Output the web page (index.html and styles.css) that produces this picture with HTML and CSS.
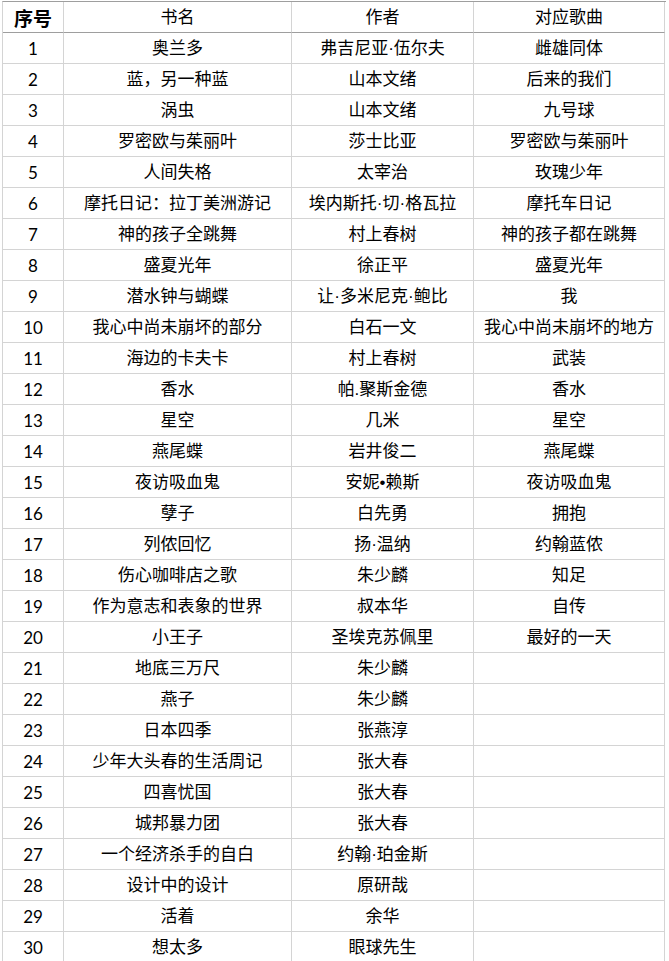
FILE: index.html
```html
<!DOCTYPE html>
<html lang="zh">
<head>
<meta charset="utf-8">
<link rel="stylesheet" href="styles.css">
</head>
<body>
<div class="sheet">
  <div class="row head">
    <div class="cell num bold">序号</div>
    <div class="cell">书名</div>
    <div class="cell">作者</div>
    <div class="cell">对应歌曲</div>
  </div>
  <div class="row"><div class="cell num">1</div><div class="cell">奥兰多</div><div class="cell">弗吉尼亚·伍尔夫</div><div class="cell">雌雄同体</div></div>
  <div class="row"><div class="cell num">2</div><div class="cell">蓝，另一种蓝</div><div class="cell">山本文绪</div><div class="cell">后来的我们</div></div>
  <div class="row"><div class="cell num">3</div><div class="cell">涡虫</div><div class="cell">山本文绪</div><div class="cell">九号球</div></div>
  <div class="row"><div class="cell num">4</div><div class="cell">罗密欧与茱丽叶</div><div class="cell">莎士比亚</div><div class="cell">罗密欧与茱丽叶</div></div>
  <div class="row"><div class="cell num">5</div><div class="cell">人间失格</div><div class="cell">太宰治</div><div class="cell">玫瑰少年</div></div>
  <div class="row"><div class="cell num">6</div><div class="cell">摩托日记：拉丁美洲游记</div><div class="cell">埃内斯托·切·格瓦拉</div><div class="cell">摩托车日记</div></div>
  <div class="row"><div class="cell num">7</div><div class="cell">神的孩子全跳舞</div><div class="cell">村上春树</div><div class="cell">神的孩子都在跳舞</div></div>
  <div class="row"><div class="cell num">8</div><div class="cell">盛夏光年</div><div class="cell">徐正平</div><div class="cell">盛夏光年</div></div>
  <div class="row"><div class="cell num">9</div><div class="cell">潜水钟与蝴蝶</div><div class="cell">让·多米尼克·鲍比</div><div class="cell">我</div></div>
  <div class="row"><div class="cell num">10</div><div class="cell">我心中尚未崩坏的部分</div><div class="cell">白石一文</div><div class="cell">我心中尚未崩坏的地方</div></div>
  <div class="row"><div class="cell num">11</div><div class="cell">海边的卡夫卡</div><div class="cell">村上春树</div><div class="cell">武装</div></div>
  <div class="row"><div class="cell num">12</div><div class="cell">香水</div><div class="cell">帕.聚斯金德</div><div class="cell">香水</div></div>
  <div class="row"><div class="cell num">13</div><div class="cell">星空</div><div class="cell">几米</div><div class="cell">星空</div></div>
  <div class="row"><div class="cell num">14</div><div class="cell">燕尾蝶</div><div class="cell">岩井俊二</div><div class="cell">燕尾蝶</div></div>
  <div class="row"><div class="cell num">15</div><div class="cell">夜访吸血鬼</div><div class="cell">安妮•赖斯</div><div class="cell">夜访吸血鬼</div></div>
  <div class="row"><div class="cell num">16</div><div class="cell">孽子</div><div class="cell">白先勇</div><div class="cell">拥抱</div></div>
  <div class="row"><div class="cell num">17</div><div class="cell">列侬回忆</div><div class="cell">扬·温纳</div><div class="cell">约翰蓝侬</div></div>
  <div class="row"><div class="cell num">18</div><div class="cell">伤心咖啡店之歌</div><div class="cell">朱少麟</div><div class="cell">知足</div></div>
  <div class="row"><div class="cell num">19</div><div class="cell">作为意志和表象的世界</div><div class="cell">叔本华</div><div class="cell">自传</div></div>
  <div class="row"><div class="cell num">20</div><div class="cell">小王子</div><div class="cell">圣埃克苏佩里</div><div class="cell">最好的一天</div></div>
  <div class="row"><div class="cell num">21</div><div class="cell">地底三万尺</div><div class="cell">朱少麟</div><div class="cell"></div></div>
  <div class="row"><div class="cell num">22</div><div class="cell">燕子</div><div class="cell">朱少麟</div><div class="cell"></div></div>
  <div class="row"><div class="cell num">23</div><div class="cell">日本四季</div><div class="cell">张燕淳</div><div class="cell"></div></div>
  <div class="row"><div class="cell num">24</div><div class="cell">少年大头春的生活周记</div><div class="cell">张大春</div><div class="cell"></div></div>
  <div class="row"><div class="cell num">25</div><div class="cell">四喜忧国</div><div class="cell">张大春</div><div class="cell"></div></div>
  <div class="row"><div class="cell num">26</div><div class="cell">城邦暴力团</div><div class="cell">张大春</div><div class="cell"></div></div>
  <div class="row"><div class="cell num">27</div><div class="cell">一个经济杀手的自白</div><div class="cell">约翰·珀金斯</div><div class="cell"></div></div>
  <div class="row"><div class="cell num">28</div><div class="cell">设计中的设计</div><div class="cell">原研哉</div><div class="cell"></div></div>
  <div class="row"><div class="cell num">29</div><div class="cell">活着</div><div class="cell">余华</div><div class="cell"></div></div>
  <div class="row"><div class="cell num">30</div><div class="cell">想太多</div><div class="cell">眼球先生</div><div class="cell"></div></div>
</div>
</body>
</html>
```

FILE: styles.css
```css
html, body {
  margin: 0;
  padding: 0;
  background: #ffffff;
}
body {
  font-family: "Liberation Sans", "Noto Sans CJK SC", sans-serif;
  font-size: 17px;
  color: #000000;
}
.sheet {
  margin: 1px 0 0 2px;
  width: 663px;
  border-left: 1px solid #d4d4d4;
  border-top: 1px solid #9e9e9e;
}
.row {
  display: grid;
  grid-template-columns: 61px 228px 182px 191px;
  height: 31px;
}
.cell {
  box-sizing: border-box;
  height: 31px;
  padding-top: 1px;
  border-right: 1px solid #d4d4d4;
  border-bottom: 1px solid #d4d4d4;
  display: flex;
  align-items: center;
  justify-content: center;
  line-height: 1;
  white-space: nowrap;
}
.head .cell {
  border-bottom-color: #9e9e9e;
}
.num {
  font-family: "Lato", "Liberation Sans", sans-serif;
  font-size: 17px;
}
.bold {
  font-family: "Noto Sans CJK SC", sans-serif;
  font-weight: 700;
  font-size: 19px;
}
```
